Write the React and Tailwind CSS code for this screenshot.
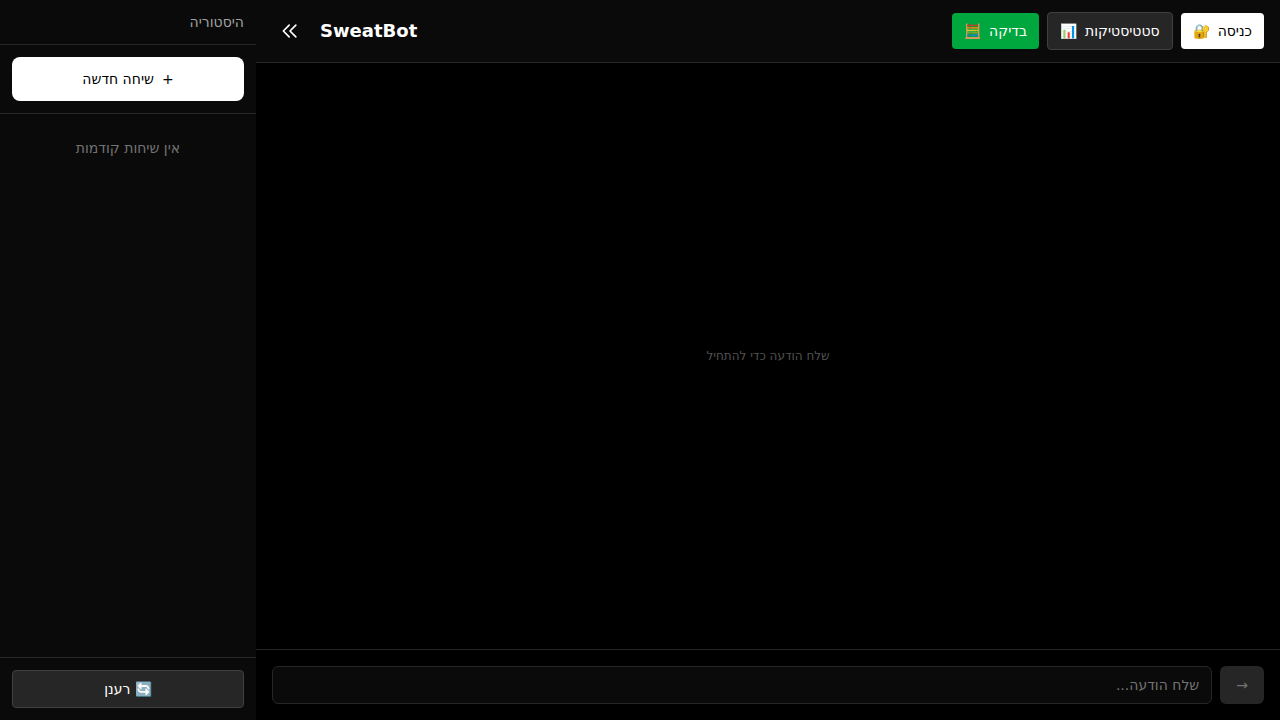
function Sidebar() {
  return (
    <aside className="flex w-64 shrink-0 flex-col bg-[#0a0a0a]">
      <div className="border-b border-[#262626] p-3">
        <h2 dir="rtl" className="text-sm text-[#a1a1a1]">היסטוריה</h2>
      </div>
      <div className="border-b border-[#262626] p-3">
        <button type="button" dir="rtl" className="flex w-full items-center justify-center gap-2 rounded-lg bg-white px-4 py-3 text-sm text-black">
          <span>+</span>
          <span>שיחה חדשה</span>
        </button>
      </div>
      <div className="flex-1 overflow-y-auto p-6">
        <p dir="rtl" className="text-center text-sm text-[#737373]">אין שיחות קודמות</p>
      </div>
      <div className="border-t border-[#262626] p-3">
        <button type="button" dir="rtl" className="w-full rounded border border-[#404040] bg-[#262626] px-3 py-2 text-sm text-white">
          🔄 רענן
        </button>
      </div>
    </aside>
  );
}

function Header() {
  return (
    <header className="flex items-center justify-between border-b border-[#262626] bg-[#0a0a0a] px-4 py-3">
      <div className="flex items-center gap-3">
        <button type="button" aria-label="סגור תפריט" className="rounded p-2 text-white">
          <svg className="size-5" fill="none" stroke="currentColor" strokeWidth="2" viewBox="0 0 24 24">
            <path strokeLinecap="round" strokeLinejoin="round" d="M11 19l-7-7 7-7m8 14l-7-7 7-7" />
          </svg>
        </button>
        <h1 className="text-lg font-bold text-white">SweatBot</h1>
      </div>
      <div dir="rtl" className="flex items-center gap-2 text-sm">
        <button type="button" className="flex items-center gap-2 rounded bg-white px-3 py-2 text-black">
          <span>כניסה</span>
          <span>🔐</span>
        </button>
        <button type="button" className="flex items-center gap-2 rounded border border-[#404040] bg-[#262626] px-3 py-2 text-white">
          <span>סטטיסטיקות</span>
          <span>📊</span>
        </button>
        <button type="button" className="flex items-center gap-2 rounded bg-[#00a63e] px-3 py-2 text-white">
          <span>בדיקה</span>
          <span>🧮</span>
        </button>
      </div>
    </header>
  );
}

export default function App() {
  return (
    <div className='flex h-screen bg-black font-["DejaVu_Sans",sans-serif]'>
      <Sidebar />
      <div className="flex min-w-0 flex-1 flex-col">
        <Header />
        <main className="flex flex-1 items-center justify-center">
          <p dir="rtl" className="text-xs text-[#525252]">שלח הודעה כדי להתחיל</p>
        </main>
        <form dir="rtl" className="flex gap-2 border-t border-[#262626] p-4" onSubmit={(e) => e.preventDefault()}>
          <button type="submit" disabled aria-label="שלח" className="rounded-md bg-[#262626] px-4 py-2 text-sm text-[#737373]">→</button>
          <input
            type="text"
            aria-label="הודעה"
            placeholder="שלח הודעה..."
            className="min-w-0 flex-1 rounded-md border border-[#262626] bg-[#0a0a0a] px-3 py-2 text-sm text-white placeholder:text-[#737373]"
          />
        </form>
      </div>
    </div>
  );
}
